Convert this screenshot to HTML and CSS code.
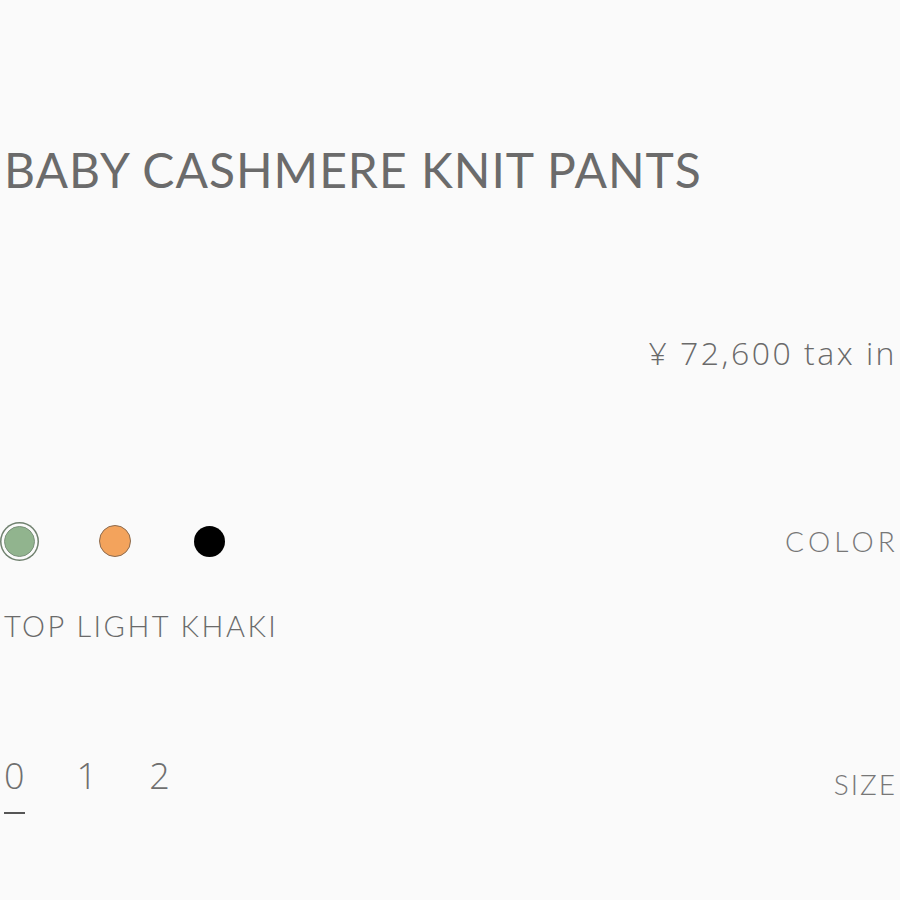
FILE: index.html
```html
<!DOCTYPE html>
<html>
<head>
<meta charset="utf-8">
<link rel="stylesheet" href="styles.css">
</head>
<body>
<div class="page">
  <h1 class="title">BABY CASHMERE KNIT PANTS</h1>
  <div class="price">¥ 72,600 tax in</div>
  <div class="row color-row">
    <div class="swatches">
      <span class="swatch khaki selected"></span>
      <span class="swatch orange"></span>
      <span class="swatch black"></span>
    </div>
    <div class="label label-color">COLOR</div>
  </div>
  <div class="color-name">TOP LIGHT KHAKI</div>
  <div class="row size-row">
    <div class="sizes">
      <span class="size active">0</span>
      <span class="size">1</span>
      <span class="size">2</span>
    </div>
    <div class="label label-size">SIZE</div>
  </div>
</div>
</body>
</html>
```
FILE: styles.css
```css
html, body {
  margin: 0;
  padding: 0;
  background: #fafafa;
}
.page {
  width: 900px;
  height: 900px;
  overflow: hidden;
  box-sizing: border-box;
  padding: 0 5px 0 4px;
  color: #6a6a6a;
  font-family: Lato, "Open Sans", sans-serif;
}
.title {
  margin: 140px 0 0 0;
  font-family: Lato, sans-serif;
  font-weight: 400;
  font-size: 48px;
  line-height: 60px;
  letter-spacing: 1px;
  color: #6b6b6b;
  white-space: nowrap;
}
.price {
  margin-top: 133px;
  text-align: right;
  font-family: "Open Sans", sans-serif;
  font-weight: 300;
  font-size: 32px;
  line-height: 40px;
  letter-spacing: 2.5px;
  margin-right: -2px;
  color: #6a6a6a;
  white-space: nowrap;
}
.row {
  display: flex;
  justify-content: space-between;
  align-items: center;
}
.color-row {
  margin-top: 148px;
}
.swatches {
  display: flex;
  align-items: center;
  gap: 0;
}
.swatch {
  display: block;
  border-radius: 50%;
  box-sizing: border-box;
}
.khaki {
  width: 31px;
  height: 31px;
  background: #91b48e;
  border: 1px solid #7a917a;
  box-shadow: 0 0 0 2.5px #fbfbfb, 0 0 0 4px #6f806e;
  margin-left: -0.5px;
}
.orange {
  width: 32px;
  height: 32px;
  background: #f3a35c;
  border: 1.5px solid #8b6b50;
  margin-left: 64.5px;
}
.black {
  width: 31px;
  height: 31px;
  background: #000;
  margin-left: 63px;
}
.label {
  font-weight: 300;
  font-size: 28px;
  color: #777;
  line-height: 40px;
}
.label-color {
  letter-spacing: 4.2px;
  margin-right: -4px;
}
.label-size {
  letter-spacing: 2px;
  margin-right: -2px;
  margin-top: 10px;
}
.color-name {
  margin-top: 45px;
  font-weight: 300;
  font-size: 29px;
  letter-spacing: 2.5px;
  line-height: 40px;
  color: #6a6a6a;
}
.size-row {
  margin-top: 108px;
  align-items: flex-start;
}
.sizes {
  display: flex;
  gap: 52px;
}
.size {
  font-family: "Open Sans", sans-serif;
  font-weight: 300;
  font-size: 36px;
  line-height: 44px;
  color: #6f6f6f;
  padding-bottom: 14px;
}
.size.active {
  border-bottom: 2px solid #555;
}
```
